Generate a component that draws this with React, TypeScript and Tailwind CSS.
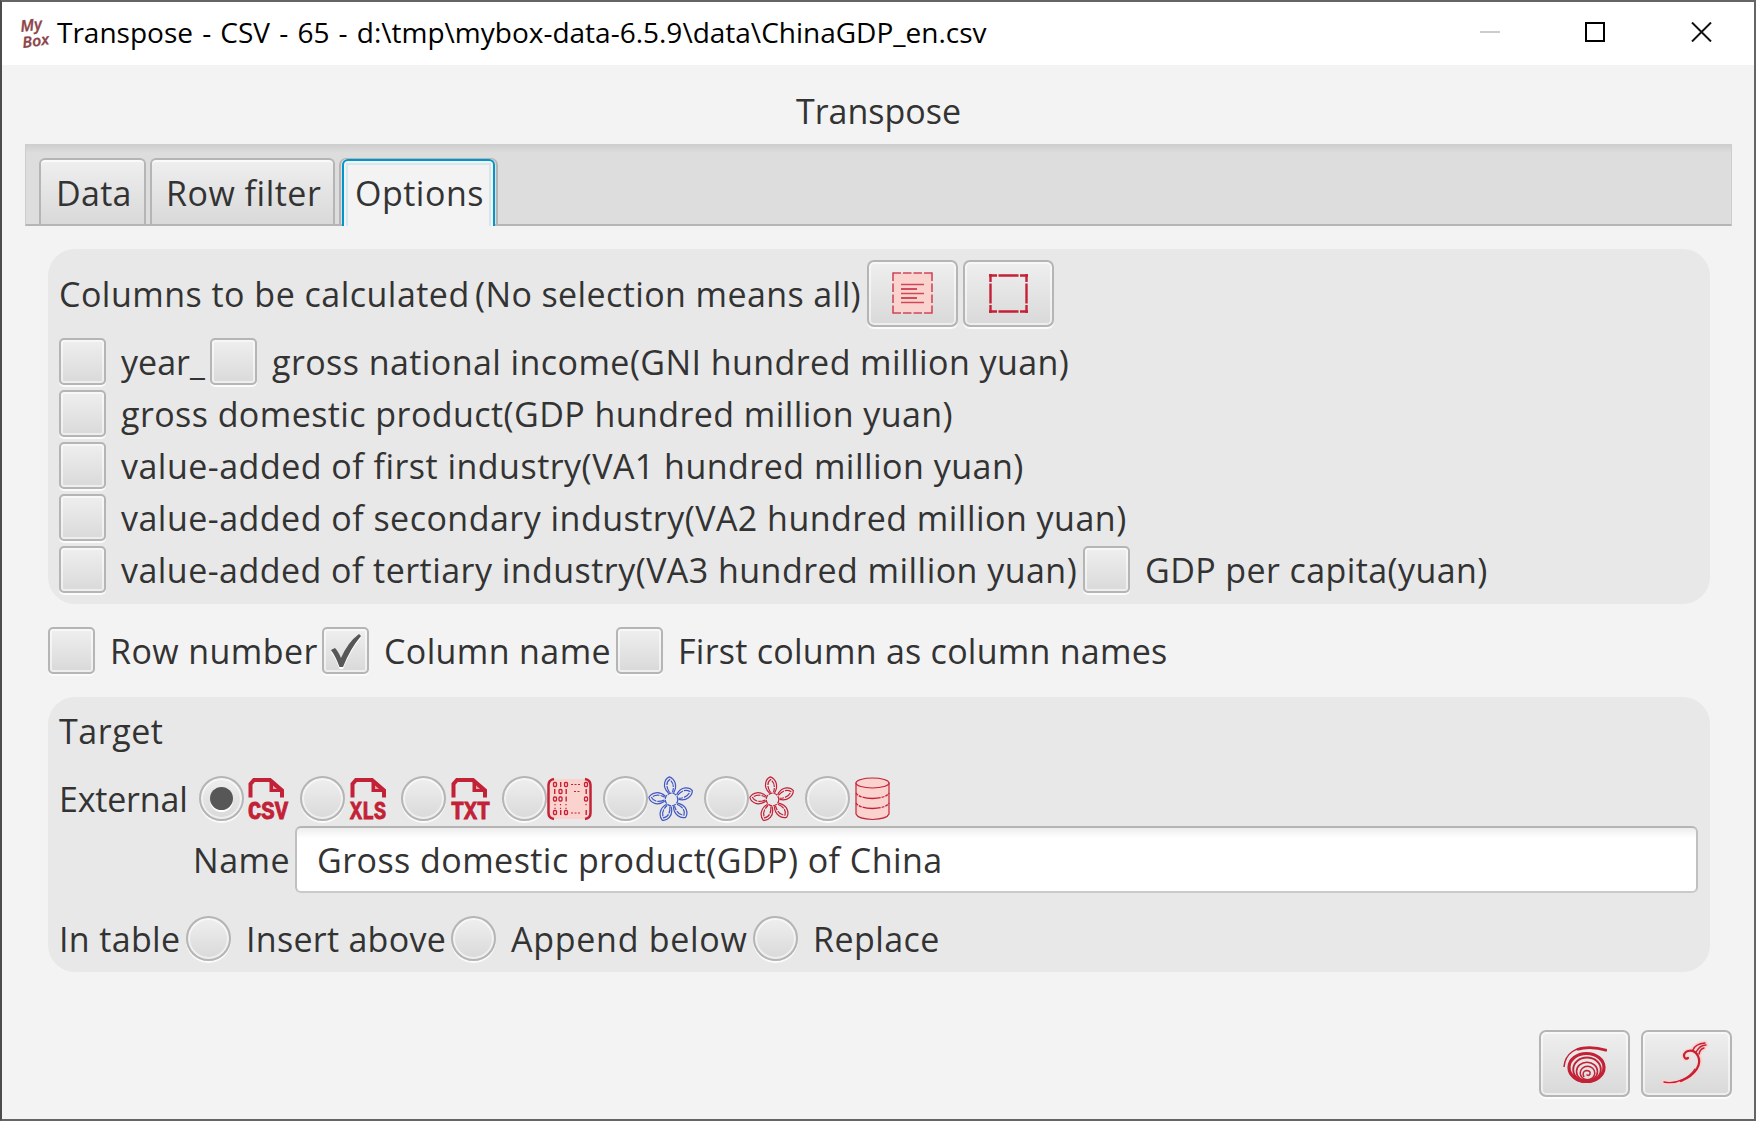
import React from "react";

type Kids = { children?: React.ReactNode };

const face =
  "border-2 border-[#b5b5b5] bg-linear-to-b from-[#efefef] to-[#d9d9d9] shadow-[0_2px_0_0_#fbfbfb,inset_0_0_0_2px_rgba(255,255,255,0.55)]";

function Check({ checked }: { checked?: boolean }) {
  return (
    <span className={`${face} flex size-[47px] shrink-0 items-center justify-center rounded-[5px]`}>
      {checked && (
        <svg width="32" height="36" viewBox="0 0 32 36">
          <path d="M1 17 L5 15 Q8 18 11 25 Q18 9 29 1 L31 3 Q20 16 13 34 L9.500 34 Q6 24 1 17Z" fill="#fff" transform="translate(0 2)" />
          <path d="M1 17 L5 15 Q8 18 11 25 Q18 9 29 1 L31 3 Q20 16 13 34 L9.500 34 Q6 24 1 17Z" fill="#575757" />
        </svg>
      )}
    </span>
  );
}

function Radio({ checked }: { checked?: boolean }) {
  return (
    <span className={`${face} flex size-[45px] shrink-0 items-center justify-center rounded-full`}>
      {checked && <span className="size-[23px] rounded-full bg-[#575757] shadow-[0_2px_0_0_#fff]" />}
    </span>
  );
}

function Button({ children }: Kids) {
  return (
    <button className={`${face} flex h-[67px] w-[91px] shrink-0 items-center justify-center rounded-[7px]`}>
      {children}
    </button>
  );
}

function FileIcon({ label, x, width }: { label: string; x: number; width: number }) {
  return (
    <svg width="48" height="45" viewBox="0 0 48 45" className="shrink-0 overflow-visible">
      <g transform={`translate(${x - 4} 0)`}>
        <path d="M5.500 21.500 V8 L9 4 H25 L37 14.500 V21.500" fill="none" stroke="#c32136" strokeWidth="4" />
        <path d="M25 2.500 L39 14.500 V16 H24.500 V3Z" fill="#c32136" />
        <path d="M28 9.500 L32 13 H28Z" fill="#e8a7ad" />
      </g>
      <text x={x - 1} y="43" fontFamily="Liberation Mono, monospace" fontWeight="700" fontSize="25" fill="#c32136" stroke="#c32136" strokeWidth="0.9" textLength={width} lengthAdjust="spacingAndGlyphs">{label}</text>
    </svg>
  );
}

function MatrixIcon() {
  const rows = [
    ["0", 7, 11], ["1", 14, 11], ["0", 18, 11], ["0", 38, 11],
    ["1", 8, 18], ["0", 12.5, 18], ["1", 19.5, 18], ["1", 39.5, 18],
    ["0", 7, 25.5], ["0", 12.5, 25.5], ["1", 19.5, 25.5], ["0", 38, 25.5],
    ["0", 7, 39], ["1", 14, 39], ["0", 18, 39], ["1", 39.5, 39],
  ] as const;
  return (
    <svg width="45" height="45" viewBox="0 0 45 45" className="shrink-0">
      <rect x="3" y="3" width="39" height="40" fill="#fbd3ce" />
      <path d="M7 3 Q1.500 4 1.500 9 V37 Q1.500 42 7 43 M38 3 Q43.500 4 43.500 9 V37 Q43.500 42 38 43" fill="none" stroke="#c32136" strokeWidth="2.500" />
      {rows.map(([c, x, y], i) =>
        c === "0" ? (
          <rect key={i} x={x - 0.5} y={y - 4.5} width="3" height="4" rx="1" fill="none" stroke="#c32136" strokeWidth="1.300" />
        ) : (
          <rect key={i} x={x - 1} y={y - 5} width="1.400" height="5" fill="#c32136" />
        ),
      )}
      <path d="M24 8.500H34 M27 15.500H34 M24 37H34" stroke="#c32136" strokeWidth="1.200" strokeDasharray="2 1.500" />
      <path d="M8 28V33 M13.500 28V33 M19 28V33 M39 28V30" stroke="#c32136" strokeWidth="1.200" strokeDasharray="1.200 2.500" />
    </svg>
  );
}

function FlowerIcon({ color }: { color: string }) {
  const angles = [-4, 68, 143, 205, 277];
  return (
    <svg width="45" height="45" viewBox="0 0 45 45" className="shrink-0">
      <g fill="none" stroke={color} strokeWidth="1.200">
        <circle cx="23.500" cy="23.500" r="6.300" strokeDasharray="4 1" />
        {angles.map((a) => (
          <g key={a} transform={`rotate(${a} 23.500 23.500)`}>
            <path d="M21 17 C14 9 19 2 23 .8 C28 3 31 10 26 17" />
            <path d="M22 16.500 C18 9 20.500 5 23 3.500 C26 6 27.500 10 25 16.500" strokeDasharray="7 1" />
          </g>
        ))}
      </g>
    </svg>
  );
}

function DatabaseIcon() {
  return (
    <svg width="45" height="45" viewBox="0 0 45 45" className="shrink-0">
      <path d="M6 7 V38 Q8 43 22.500 43.500 Q37 43 39 38 V7Z" fill="#fbd3ce" stroke="#c32136" strokeWidth="1.200" />
      <ellipse cx="22.500" cy="7" rx="16.500" ry="5" fill="#fbd3ce" stroke="#c32136" strokeWidth="1.200" />
      <path d="M6 17 Q9 22 22.500 22.500 Q36 22 39 17 M6 27 Q9 32 22.500 32.500 Q36 32 39 27" fill="none" stroke="#c32136" strokeWidth="1.300" strokeDasharray="3 1 3 1 18 1 3 1" />
    </svg>
  );
}

function SelectAllIcon() {
  return (
    <svg width="41" height="42" viewBox="0 0 41 42" className="mb-[2px]">
      <rect x="1" y="1" width="39" height="40" fill="#fbd3ce" />
      <g stroke="#d0475a" strokeWidth="1.600" fill="none">
        <path d="M.8 1H9M11 1H19.500M21.500 1H30M32 1H40.200M.8 41H9M11 41H19.500M21.500 41H30M32 41H40.200" />
        <path d="M1 .5V9M1 11.500V20M1 22.500V31M1 33.500V41.500M40 .5V9M40 11.500V20M40 22.500V31M40 33.500V41.500" />
        <path d="M9 12.500H32M9 21.500H32M9 30.500H32" />
        <path d="M9 17H25M9 26H25" stroke="#c32136" strokeWidth="1.300" />
      </g>
    </svg>
  );
}

function SelectNoneIcon() {
  return (
    <svg width="39" height="39" viewBox="0 0 39 39">
      <g stroke="#c32136" strokeWidth="2.400" fill="none">
        <path d="M0 1.500H8M9.500 1.500H29.500M31 1.500H39M0 37.500H8M9.500 37.500H29.500M31 37.500H39" />
        <path d="M1.500 0V8M1.500 9.500V29.500M1.500 31V39M37.500 0V8M37.500 9.500V29.500M37.500 31V39" />
      </g>
    </svg>
  );
}

function SpiralIcon() {
  return (
    <svg width="45" height="45" viewBox="0 0 45 45">
      <g fill="none" stroke="#c32136">
        <path d="M2 26 C3 12 15 5 28 7" strokeWidth="1.500" />
        <path d="M15 8.500 C24 5.500 34 6 45 9.500" strokeWidth="2.800" />
        <ellipse cx="24.500" cy="26.500" rx="17.500" ry="14" strokeWidth="3.200" />
        <ellipse cx="25" cy="28.500" rx="13.800" ry="12" strokeWidth="1.900" />
        <ellipse cx="25" cy="30.500" rx="10.500" ry="9.300" strokeWidth="1.600" />
        <ellipse cx="25.500" cy="32" rx="7.300" ry="6.800" strokeWidth="1.500" />
        <path d="M22 36 Q19.500 31 24 29.500 Q29 29.500 28 33 Q26.500 35.500 24.500 33.500" strokeWidth="1.500" />
      </g>
      <path d="M8 32 Q16 39 24 38 Q33 39 41 31 Q37 42 25 42 Q12 42 8 32Z" fill="#c32136" />
    </svg>
  );
}

function TendrilIcon() {
  return (
    <svg width="48" height="48" viewBox="0 0 48 48" className="mr-[3px] mb-[2px]">
      <g fill="none" strokeLinecap="round">
        <path d="M3 43 C22 48 43 30 38 18 C35 9 22 10 23 18 Q24 21 27 19 M32 11 Q34 5 44 4 M35 13 Q39 6 45 6 M38 15 Q39 10 43 9" stroke="#fbd3ce" strokeWidth="5" />
        <path d="M3 43 C16 46 29 38 34 30" stroke="#c32136" strokeWidth="1.400" />
        <path d="M20 42 C35 36 41 25 37 17 C33 9 23 11 23 17 Q24 21 27 19" stroke="#c32136" strokeWidth="2.200" />
        <path d="M32 11 Q34 5 44 4 M35 13 Q39 6 45 6 M38 15 Q39 10 43 9" stroke="#c32136" strokeWidth="1.500" />
      </g>
    </svg>
  );
}

function Logo() {
  return (
    <svg width="34" height="34" viewBox="0 0 34 34" className="shrink-0 overflow-visible">
      <g fontFamily="Open Sans, sans-serif" fontStyle="italic" fontWeight="600" fill="#8d4448" stroke="#8d4448" strokeWidth="0.3">
        <text x="2" y="15" fontSize="16" transform="rotate(-7 2 15)">My</text>
        <text x="4" y="31" fontSize="15" transform="rotate(-8 4 31)" textLength="27" lengthAdjust="spacingAndGlyphs">Box</text>
      </g>
    </svg>
  );
}

export default function App() {
  return (
    <div className="flex h-[1121px] w-[1756px] flex-col border-2 border-[#666464] border-l-[#4c4c4c] bg-[#f3f3f3] font-['Open_Sans',sans-serif] text-[34px] leading-[49px] whitespace-nowrap text-[#333]">
      <header className="flex h-[63px] shrink-0 items-center bg-white text-black">
        <div className="ml-[17px] w-[38px]"><Logo /></div>
        <span className="flex-1 pb-[2px] text-[28px] [word-spacing:1.9px]">Transpose - CSV - 65 - d:\tmp\mybox-data-6.5.9\data\ChinaGDP_en.csv</span>
        <svg width="232" height="20" viewBox="0 0 232 20" className="mr-[42px] mb-[3px]" fill="none" strokeWidth="2">
          <path d="M0 10H20" stroke="#ccc" />
          <rect x="106" y="1" width="18" height="18" stroke="#000" />
          <path d="M212 .5L231 19.500M231 .5L212 19.500" stroke="#111" />
        </svg>
      </header>

      <h1 className="h-[79px] shrink-0 pt-[22px] pl-px text-center">Transpose</h1>

      <nav className="mr-[22px] ml-[23px] flex h-[82px] shrink-0 items-end border-x border-b-2 border-x-[#cdcdcd] border-b-[#b5b5b5] bg-[linear-gradient(#cdcdcd,#ddd_9px)] pl-[13px]">
        <div className="h-[66px] w-[107px] rounded-t-[6px] border-2 border-b-0 border-[#b5b5b5] bg-linear-to-b from-[#efefef] to-[#d9d9d9] pt-[9px] pl-[15px] tracking-[0.3px] shadow-[inset_0_2px_0_#fafafa]">Data</div>
        <div className="ml-[4px] h-[66px] w-[185px] rounded-t-[6px] border-2 border-b-0 border-[#b5b5b5] bg-linear-to-b from-[#efefef] to-[#d9d9d9] pt-[9px] pl-[14px] tracking-[0.5px] shadow-[inset_0_2px_0_#fafafa]">Row filter</div>
        <div className="-mb-[2px] ml-[4px] h-[68px] w-[159px] rounded-t-[7px] border-x-2 border-t border-[#b5b5b5] px-px">
          <div className="h-full rounded-t-[6px] border-2 border-b-0 border-[#0096c9] bg-[#f3f3f3] px-[2px] pt-[2px]">
            <div className="h-full border-2 border-b-0 border-[#d5e8ef] pt-[4px] pl-[7px] tracking-[0.5px]">Options</div>
          </div>
        </div>
      </nav>

      <main className="ml-[46px] w-[1662px]">
        <section className="mt-[23px] h-[355px] rounded-[27px] bg-[#e8e8e8] pt-[11px] pl-[11px]">
          <div className="flex h-[67px] items-center">
            <span className="w-[416px] pt-[2px] tracking-[0.48px]">Columns to be calculated</span>
            <span className="w-[392px] pt-[2px] tracking-[0.4px]">(No selection means all)</span>
            <div className="flex gap-[5px]">
              <Button><SelectAllIcon /></Button>
              <Button><SelectNoneIcon /></Button>
            </div>
          </div>
          <div className="mt-[11px] flex flex-col gap-[5px]">
            <div className="flex h-[47px]">
              <Check /><span className="w-[104px] pl-[15px]">year_</span>
              <Check /><span className="pl-[15px] tracking-[0.43px]">gross national income(GNI hundred million yuan)</span>
            </div>
            <div className="flex h-[47px]"><Check /><span className="pl-[15px] tracking-[0.43px]">gross domestic product(GDP hundred million yuan)</span></div>
            <div className="flex h-[47px]"><Check /><span className="pl-[15px] tracking-[0.48px]">value-added of first industry(VA1 hundred million yuan)</span></div>
            <div className="flex h-[47px]"><Check /><span className="pl-[15px] tracking-[0.475px]">value-added of secondary industry(VA2 hundred million yuan)</span></div>
            <div className="flex h-[47px]">
              <Check /><span className="w-[977px] pl-[15px] tracking-[0.455px]">value-added of tertiary industry(VA3 hundred million yuan)</span>
              <Check /><span className="pl-[15px] tracking-[0.41px]">GDP per capita(yuan)</span>
            </div>
          </div>
        </section>

        <div className="mt-[23px] flex h-[47px]">
          <Check /><span className="w-[227px] pl-[15px] tracking-[0.42px]">Row number</span>
          <Check checked /><span className="w-[247px] pl-[15px] tracking-[0.38px]">Column name</span>
          <Check /><span className="pl-[15px] tracking-[0.26px]">First column as column names</span>
        </div>

        <section className="mt-[23px] h-[275px] rounded-[27px] bg-[#e8e8e8] pt-[10px] pl-[11px]">
          <div className="h-[47px] tracking-[0.55px]">Target</div>
          <div className="mt-[22px] flex h-[45px] items-center">
            <span className="w-[140px] pt-[2px] tracking-[-0.2px]">External</span>
            <div className="flex w-[101px]"><Radio checked /><FileIcon label="CSV" x={5} width={40} /></div>
            <div className="flex w-[101px]"><Radio /><FileIcon label="XLS" x={6} width={36} /></div>
            <div className="flex w-[101px]"><Radio /><FileIcon label="TXT" x={6} width={39} /></div>
            <div className="flex w-[101px]"><Radio /><MatrixIcon /></div>
            <div className="flex w-[101px]"><Radio /><FlowerIcon color="#4257c4" /></div>
            <div className="flex w-[101px]"><Radio /><FlowerIcon color="#c32136" /></div>
            <div className="flex w-[101px]"><Radio /><DatabaseIcon /></div>
          </div>
          <div className="mt-[5px] flex h-[67px] items-center">
            <span className="w-[236px] pt-[2px] pl-[134px] tracking-[0.55px]">Name</span>
            <div className="flex h-[67px] w-[1403px] items-center rounded-[6px] border-2 border-t-[#b5b5b5] border-x-[#c0c0c0] border-b-[#cacaca] bg-[linear-gradient(#ededed,#fff_10px)] pt-[2px] pl-[20px] tracking-[0.45px]">Gross domestic product(GDP) of China</div>
          </div>
          <div className="mt-[23px] flex h-[45px] items-center">
            <span className="w-[127px] pt-[2px] tracking-[0.35px]">In table</span>
            <Radio /><span className="w-[220px] pt-[2px] pl-[15px] tracking-[0.28px]">Insert above</span>
            <Radio /><span className="w-[257px] pt-[2px] pl-[15px] tracking-[0.72px]">Append below</span>
            <Radio /><span className="pt-[2px] pl-[15px] tracking-[0.45px]">Replace</span>
          </div>
        </section>
      </main>

      <footer className="mt-[58px] mr-[22px] flex justify-end gap-[11px]">
        <Button><SpiralIcon /></Button>
        <Button><TendrilIcon /></Button>
      </footer>
    </div>
  );
}
